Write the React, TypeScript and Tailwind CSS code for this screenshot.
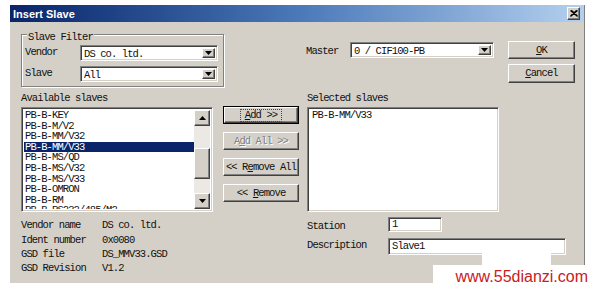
import React from 'react';

const raised =
  'bg-[#d4d0c8] border border-t-white border-l-white border-r-[#404040] border-b-[#404040] shadow-[inset_-1px_-1px_0_#808080]';
const sunken =
  'bg-white border border-t-[#808080] border-l-[#808080] border-r-white border-b-white shadow-[inset_1px_1px_0_#404040,inset_-1px_-1px_0_#d4d0c8]';

const Arrow = ({ up }: { up?: boolean }) => (
  <svg width="7" height="4" viewBox="0 0 7 4">
    <polygon points={up ? '0,4 7,4 3.5,0' : '0,0 7,0 3.5,4'} fill="#000" />
  </svg>
);

const Combo = ({ value, width }: { value: string; width: string }) => (
  <div className={`${width} h-[16px] flex items-stretch p-[2px] ${sunken}`}>
    <span className="flex-1 leading-[12px] pl-[1px] whitespace-nowrap">{value}</span>
    <div className={`w-[13px] flex items-center justify-center ${raised}`}>
      <Arrow />
    </div>
  </div>
);

const Button = ({
  children,
  height = 'h-[18px]',
  isDefault,
  disabled,
}: {
  children: React.ReactNode;
  height?: string;
  isDefault?: boolean;
  disabled?: boolean;
}) => (
  <div className={`${height} w-full ${isDefault ? 'border border-black' : ''}`}>
    <div className={`h-full w-full flex items-center justify-center ${raised}`}>
      <span
        className={`px-[4px] leading-[11px] whitespace-nowrap ${
          isDefault ? 'outline outline-1 outline-dotted outline-[#444]' : ''
        } ${disabled ? 'text-[#808080] [text-shadow:1px_1px_0_#fff]' : ''}`}
      >
        {children}
      </span>
    </div>
  </div>
);

const U = ({ children }: { children: React.ReactNode }) => (
  <span className="underline underline-offset-[1px]">{children}</span>
);

const slaves = [
  'PB-B-KEY',
  'PB-B-M/V2',
  'PB-B-MM/V32',
  'PB-B-MM/V33',
  'PB-B-MS/QD',
  'PB-B-MS/V32',
  'PB-B-MS/V33',
  'PB-B-OMRON',
  'PB-B-RM',
  'PB-B-RS232/485/M2',
];

const info = [
  ['Vendor name', 'DS co. ltd.'],
  ['Ident number', '0x0080'],
  ['GSD file', 'DS_MMV33.GSD'],
  ['GSD Revision', 'V1.2'],
];

export default function App() {
  return (
    <div className="relative w-[592px] h-[289px] bg-white overflow-hidden pl-[10px] pt-[5px]">
      <div className="w-[575px] h-[278px] flex flex-col border-r border-r-[#808080]">
        {/* Title bar */}
        <div className="h-[17px] flex items-center justify-between pl-[3px] pr-[4px] bg-linear-to-r from-[#0a246a] via-[#4a78b8] to-[#b4d0ee]">
          <span className="font-['Liberation_Sans',sans-serif] font-bold text-[11px] text-white leading-[12px]">
            Insert Slave
          </span>
          <div className={`w-[13px] h-[13px] flex items-center justify-center ${raised}`}>
            <svg width="8" height="7" viewBox="0 0 8 7">
              <path d="M0.5 0.5 L7.5 6.5 M1.5 0.5 L7.5 5.8 M7.5 0.5 L0.5 6.5 M6.5 0.5 L0.5 5.8" stroke="#000" strokeWidth="1.1" />
            </svg>
          </div>
        </div>

        {/* Body */}
        <div className="flex-1 bg-[#d4d0c8] flex flex-col pl-[11px] pt-[12px] font-['Liberation_Mono',monospace] text-[10.5px] tracking-[-0.9px] text-[#111]">
          {/* Top row */}
          <div className="flex items-start">
            <div className="relative w-[203px] h-[53px] border border-[#808080] shadow-[1px_1px_0_#fff,inset_1px_1px_0_#fff]">
              <span className="absolute left-[5px] top-[-3px] px-[1px] bg-[#d4d0c8] leading-[10px]">
                Slave Filter
              </span>
              <div className="flex flex-col gap-[5px] pt-[10px] pl-[3px]">
                <div className="flex items-center">
                  <span className="w-[55px]">Vendor</span>
                  <Combo value="DS co. ltd." width="w-[138px]" />
                </div>
                <div className="flex items-center">
                  <span className="w-[55px]">Slave</span>
                  <Combo value="All" width="w-[138px]" />
                </div>
              </div>
            </div>

            <div className="ml-[82px] mt-[7px] flex items-center">
              <span className="w-[44px] pt-[3px]">Master</span>
              <Combo value="0 / CIF100-PB" width="w-[144px]" />
            </div>

            <div className="ml-[14px] mt-[7px] w-[67px] flex flex-col gap-[5px]">
              <Button>
                <U>O</U>K
              </Button>
              <Button height="h-[19px]">
                <U>C</U>ancel
              </Button>
            </div>
          </div>

          {/* Lists */}
          <div className="flex items-start mt-[5px]">
            <div className="w-[192px] flex flex-col">
              <span className="h-[12px] leading-[12px]">Available slaves</span>
              <div className={`mt-[3px] h-[105px] flex p-[2px] ${sunken}`}>
                <div className="flex-1 overflow-hidden flex flex-col">
                  {slaves.map((s) => (
                    <div
                      key={s}
                      className={`h-[10.6px] shrink-0 leading-[10.6px] pl-[1px] whitespace-nowrap ${
                        s === 'PB-B-MM/V33' ? 'bg-[#0a246a] text-white' : ''
                      }`}
                    >
                      {s}
                    </div>
                  ))}
                </div>
                <div className="w-[16px] flex flex-col bg-[#ece9e4]">
                  <div className={`h-[16px] flex items-center justify-center ${raised}`}>
                    <Arrow up />
                  </div>
                  <div className="h-[22px]" />
                  <div className={`h-[31px] ${raised}`} />
                  <div className="flex-1" />
                  <div className={`h-[16px] flex items-center justify-center ${raised}`}>
                    <Arrow />
                  </div>
                </div>
              </div>
            </div>

            <div className="ml-[10px] w-[76px] pt-[14px] flex flex-col gap-[8px]">
              <Button isDefault>
                <U>A</U>dd &gt;&gt;
              </Button>
              <Button disabled>
                A<U>d</U>d All &gt;&gt;
              </Button>
              <Button>
                &lt;&lt; R<U>e</U>move All
              </Button>
              <Button>
                &lt;&lt; <U>R</U>emove
              </Button>
            </div>

            <div className="ml-[8px] w-[192px] flex flex-col">
              <span className="h-[12px] leading-[12px]">Selected slaves</span>
              <div className={`mt-[3px] h-[105px] p-[2px] ${sunken}`}>
                <div className="h-[10.6px] leading-[10.6px] pl-[2px]">PB-B-MM/V33</div>
              </div>
            </div>
          </div>

          {/* Bottom row */}
          <div className="flex items-start">
            <div className="w-[286px] pt-[7px] flex flex-col">
              {info.map(([k, v]) => (
                <div key={k} className="h-[14.3px] flex items-center">
                  <span className="w-[81px]">{k}</span>
                  <span>{v}</span>
                </div>
              ))}
            </div>
            <div className="pt-[3px] flex flex-col gap-[3px]">
              <div className="flex items-center">
                <span className="w-[81px] pt-[4px]">Station</span>
                <div className={`w-[54px] h-[15px] pl-[3px] leading-[13px] ${sunken}`}>1</div>
              </div>
              <div className="flex items-center">
                <span className="w-[81px]">Description</span>
                <div className={`w-[178px] h-[17px] pl-[3px] leading-[15px] ${sunken}`}>Slave1</div>
              </div>
            </div>
          </div>
        </div>
      </div>

      {/* watermark overlay */}
      <div className="absolute left-[482px] top-[253px] w-[69px] h-[12px] bg-white" />
      <div className="absolute left-[433px] top-[265px] right-0 bottom-0 bg-white flex items-center justify-end pr-[4px]">
        <span className="font-['Liberation_Sans',sans-serif] text-[16px] leading-[18px] text-[#c8201e]">
          www.55dianzi.com
        </span>
      </div>
    </div>
  );
}
